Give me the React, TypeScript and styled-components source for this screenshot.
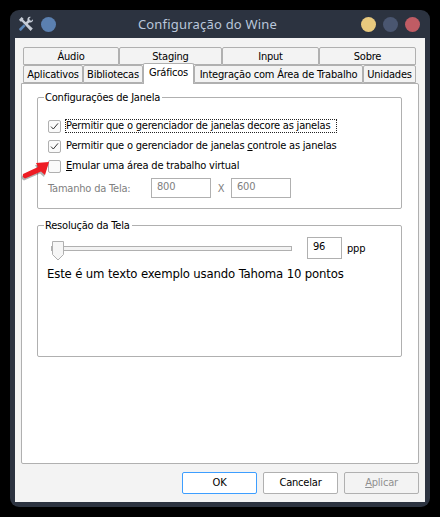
import React from "react";
import styled, { createGlobalStyle } from "styled-components";

const Global = createGlobalStyle`
  html, body { margin: 0; padding: 0; background: #000; }
  body {
    width: 440px;
    height: 517px;
    overflow: hidden;
    font-family: "DejaVu Sans", sans-serif;
    font-stretch: condensed;
    letter-spacing: -0.2px;
  }
`;

const Desktop = styled.div`
  position: relative;
  box-sizing: border-box;
  width: 440px;
  height: 517px;
  padding: 10px;
  background: #000;
`;

const Win = styled.div`
  box-sizing: border-box;
  height: 497px;
  display: flex;
  flex-direction: column;
  padding: 0 5px 5px;
  background: #2c3340;
  border-radius: 9px;
`;

const TitleBar = styled.div`
  height: 28px;
  display: flex;
  align-items: center;
  position: relative;
  flex: none;
`;

const TitleText = styled.div`
  position: absolute;
  left: 0;
  right: 25px;
  top: 4px;
  text-align: center;
  font: 13px/20px "Noto Sans", sans-serif;
  letter-spacing: 0.2px;
  color: #b9c6da;
`;

const Dot = styled.span<{ $c: string; $ml: number }>`
  flex: none;
  width: 15px;
  height: 15px;
  border-radius: 50%;
  background: ${(p) => p.$c};
  margin-left: ${(p) => p.$ml}px;
`;

const Body = styled.div`
  flex: 1;
  display: flex;
  flex-direction: column;
  padding: 9px 6px 0;
  background: #f3f3f3;
  min-height: 0;
`;

const TabRow = styled.div`
  display: flex;
  height: 18px;
  flex: none;
  padding-left: 2px;
  position: relative;
`;

const Tab = styled.div<{ $w: number; $active?: boolean }>`
  box-sizing: border-box;
  width: ${(p) => p.$w}px;
  height: ${(p) => (p.$active ? 21 : 18)}px;
  margin-top: ${(p) => (p.$active ? -2 : 0)}px;
  margin-bottom: ${(p) => (p.$active ? -1 : 0)}px;
  position: relative;
  z-index: ${(p) => (p.$active ? 2 : 1)};
  background: ${(p) => (p.$active ? "#fff" : "#f3f3f3")};
  border: 1px solid #b0b0b0;
  border-bottom: ${(p) => (p.$active ? "none" : "1px solid #b0b0b0")};
  border-radius: 2px 2px 0 0;
  text-align: center;
  font-size: 11px;
  line-height: 17px;
  color: #000;
  white-space: nowrap;
  flex: none;
`;

const Pane = styled.div`
  box-sizing: border-box;
  height: 381px;
  flex: none;
  background: #fff;
  border: 1px solid #b0b0b0;
  border-radius: 0 2px 2px 2px;
  padding: 7px 16px 0 15px;
  display: flex;
  flex-direction: column;
`;

const Group = styled.fieldset<{ $h: number; $mt?: number }>`
  box-sizing: border-box;
  margin: ${(p) => p.$mt ?? 0}px 0 0;
  padding: 0 0 0 10px;
  height: ${(p) => p.$h}px;
  flex: none;
  border: 1px solid #b0b0b0;
  border-radius: 2px;
  min-width: 0;
`;

const Legend = styled.legend`
  font-size: 11px;
  line-height: 13px;
  padding: 0 2px 0 1px;
  margin-left: -4px;
  color: #000;
`;

const CheckList = styled.div`
  margin-top: 12px;
`;

const CheckRow = styled.div`
  display: flex;
  align-items: center;
  height: 20px;
  font-size: 11px;
  color: #000;
`;

const Box = styled.span`
  box-sizing: border-box;
  flex: none;
  width: 13px;
  height: 13px;
  border: 1px solid #b0b0b0;
  border-radius: 2px;
  background: #fafafa;
  margin-right: 4px;
  display: flex;
  align-items: center;
  justify-content: center;
`;

const Label = styled.span<{ $focus?: boolean }>`
  padding: 0 ${(p) => (p.$focus ? 7 : 1)}px 0 1px;
  height: 14px;
  line-height: 14px;
  white-space: nowrap;
  outline: ${(p) => (p.$focus ? "1px dotted #222" : "none")};
  outline-offset: -1px;
`;

const Accel = styled.span`
  text-decoration: underline;
`;

const SizeRow = styled.div`
  display: flex;
  align-items: center;
  height: 20px;
  margin-top: 2px;
  font-size: 11px;
  color: #808080;
`;

const SizeLabel = styled.span`
  width: 103px;
  flex: none;
`;

const Field = styled.div<{ $w: number; $h: number; $disabled?: boolean; $ml?: number }>`
  box-sizing: border-box;
  width: ${(p) => p.$w}px;
  height: ${(p) => p.$h}px;
  margin-left: ${(p) => p.$ml ?? 0}px;
  flex: none;
  border: 1px solid #b0b0b0;
  padding-left: 5px;
  font-size: 11px;
  line-height: ${(p) => p.$h - 4}px;
  color: ${(p) => (p.$disabled ? "#808080" : "#000")};
  background: #fff;
`;

const XLabel = styled.span`
  width: 20px;
  text-align: center;
  flex: none;
`;

const SliderRow = styled.div`
  display: flex;
  align-items: center;
  height: 22px;
  margin-top: 5px;
`;

const Track = styled.div`
  position: relative;
  width: 241px;
  height: 5px;
  margin-left: 3px;
  flex: none;
  box-sizing: border-box;
  border: 1px solid #b0b0b0;
  background: #f3f3f3;
`;

const Thumb = styled.svg`
  position: absolute;
  left: 0;
  top: -6px;
`;

const Unit = styled.span`
  font-size: 11px;
  color: #000;
  margin-left: 5px;
`;

const Sample = styled.div`
  margin: 6px 0 0 -1px;
  font-size: 13px;
  line-height: 18px;
  letter-spacing: -0.15px;
  color: #000;
  white-space: nowrap;
`;

const Footer = styled.div`
  flex: 1;
  display: flex;
  justify-content: flex-end;
  gap: 6px;
  padding-top: 8px;
`;

const Btn = styled.div<{ $kind?: "default" | "disabled" }>`
  box-sizing: border-box;
  width: 75px;
  height: 22px;
  border: 1px solid ${(p) => (p.$kind === "default" ? "#3d9eff" : "#b0b0b0")};
  border-radius: 2px;
  background: ${(p) => (p.$kind === "disabled" ? "#f3f3f3" : "#fff")};
  text-align: center;
  font-size: 11px;
  line-height: 20px;
  color: ${(p) => (p.$kind === "disabled" ? "#909090" : "#000")};
`;

const Arrow = styled.svg`
  position: absolute;
  left: 18px;
  top: 155px;
`;

const ToolSvg = styled.svg`
  flex: none;
  margin-left: 3px;
`;

const ToolIcon = () => (
  <ToolSvg width="16" height="16" viewBox="0 0 16 16">
    <path d="M1 3.8 3.6 1 5.4 2.4 5.2 3.8 14.8 12.6 12.6 15 3.8 5.4 2.4 5.6Z" fill="#c6ccd6" />
    <path d="M15 3.2 13.4 4.8 11.8 4.2 11.2 2.6 12.8 1C11 .4 9.4 1.6 9.4 3.6L9.5 4.6 6.8 7.2 8.6 9 11.3 6.4C13.4 7 15.6 5.4 15 3.2Z" fill="#c6ccd6" />
    <path d="M5.8 8.2 7.6 10 3.4 14.6C2.4 15.6.4 13.8 1.4 12.6Z" fill="#5b86b8" />
  </ToolSvg>
);

const Check = () => (
  <svg width="11" height="11" viewBox="0 0 11 11">
    <path d="M2 5.6 4.3 8 9 2.4" fill="none" stroke="#333" strokeWidth="1" />
  </svg>
);

export default function App() {
  return (
    <Desktop>
      <Global />
      <Win>
        <TitleBar>
          <TitleText>Configuração do Wine</TitleText>
          <ToolIcon />
          <Dot $c="#5b80b0" $ml={7} />
          <Dot $c="#e8c97e" $ml={305} />
          <Dot $c="#4a5670" $ml={7} />
          <Dot $c="#c05c64" $ml={7} />
        </TitleBar>
        <Body>
          <TabRow>
            <Tab $w={96}>Áudio</Tab>
            <Tab $w={103}>Staging</Tab>
            <Tab $w={97}>Input</Tab>
            <Tab $w={97}>Sobre</Tab>
          </TabRow>
          <TabRow>
            <Tab $w={60}>Aplicativos</Tab>
            <Tab $w={60}>Bibliotecas</Tab>
            <Tab $w={51} $active>Gráficos</Tab>
            <Tab $w={169}>Integração com Área de Trabalho</Tab>
            <Tab $w={53}>Unidades</Tab>
          </TabRow>
          <Pane>
            <Group $h={118}>
              <Legend>Configurações de Janela</Legend>
              <CheckList>
                <CheckRow>
                  <Box><Check /></Box>
                  <Label $focus>Permitir que o gerenciador de janelas decore as janelas</Label>
                </CheckRow>
                <CheckRow>
                  <Box><Check /></Box>
                  <Label>Permitir que o gerenciador de janelas <Accel>c</Accel>ontrole as janelas</Label>
                </CheckRow>
                <CheckRow>
                  <Box />
                  <Label><Accel>E</Accel>mular uma área de trabalho virtual</Label>
                </CheckRow>
              </CheckList>
              <SizeRow>
                <SizeLabel>Tamanho da Tela:</SizeLabel>
                <Field $w={60} $h={20} $disabled>800</Field>
                <XLabel>X</XLabel>
                <Field $w={60} $h={20} $disabled>600</Field>
              </SizeRow>
            </Group>
            <Group $h={138} $mt={10}>
              <Legend>Resolução da Tela</Legend>
              <SliderRow>
                <Track>
                  <Thumb width="12" height="20" viewBox="0 0 12 20">
                    <path d="M.5.5h11v13l-5.5 5.5L.5 13.5Z" fill="#f6f6f6" stroke="#b0b0b0" />
                  </Thumb>
                </Track>
                <Field $w={35} $h={22} $ml={15}>96</Field>
                <Unit>ppp</Unit>
              </SliderRow>
              <Sample>Este é um texto exemplo usando Tahoma 10 pontos</Sample>
            </Group>
          </Pane>
          <Footer>
            <Btn $kind="default">OK</Btn>
            <Btn>Cancelar</Btn>
            <Btn $kind="disabled"><Accel>A</Accel>plicar</Btn>
          </Footer>
        </Body>
      </Win>
      <Arrow width="36" height="28" viewBox="0 0 36 28">
        <path d="M5 19 20 12 18 8 31 7 27 20 23 16.5 7 23.5Q4 22 5 19Z" fill="#000" opacity=".3" transform="translate(-1 2)" />
        <path d="M5 19 20 12 18 8 31 7 27 20 23 16.5 7 23.5Q4 22 5 19Z" fill="#ee1c24" />
      </Arrow>
    </Desktop>
  );
}
